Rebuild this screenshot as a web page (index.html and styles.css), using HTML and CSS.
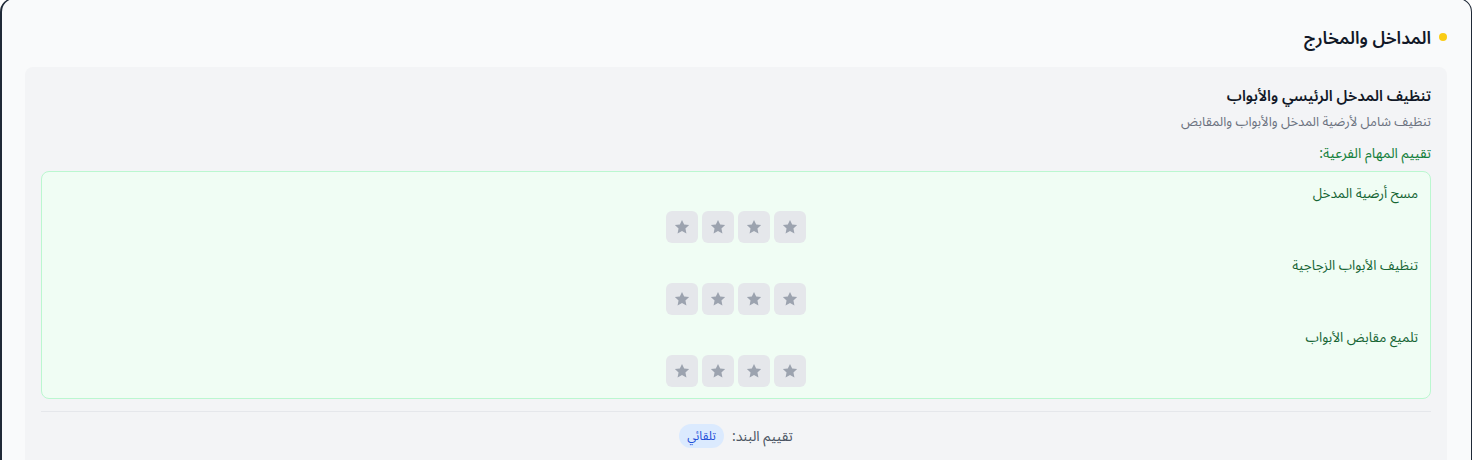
FILE: index.html
```html
<!DOCTYPE html>
<html lang="ar" dir="rtl">
<head>
<meta charset="utf-8">
<link rel="stylesheet" href="styles.css">
</head>
<body>
<div class="section">
  <div class="section-head">
    <span class="dot"></span>
    <h2 class="section-title">المداخل والمخارج</h2>
  </div>
  <div class="item">
    <h3 class="item-title">تنظيف المدخل الرئيسي والأبواب</h3>
    <p class="item-desc">تنظيف شامل لأرضية المدخل والأبواب والمقابض</p>
    <p class="sub-head">تقييم المهام الفرعية:</p>
    <div class="subtasks">
      <div class="subtask">
        <div class="subtask-name">مسح أرضية المدخل</div>
        <div class="stars">
          <button class="star"><svg viewBox="0 0 24 24"><path d="M12 2.5l2.9 6.1 6.6.8-4.9 4.6 1.3 6.6L12 17.3l-5.9 3.3 1.3-6.6-4.9-4.6 6.6-.8z"/></svg></button>
          <button class="star"><svg viewBox="0 0 24 24"><path d="M12 2.5l2.9 6.1 6.6.8-4.9 4.6 1.3 6.6L12 17.3l-5.9 3.3 1.3-6.6-4.9-4.6 6.6-.8z"/></svg></button>
          <button class="star"><svg viewBox="0 0 24 24"><path d="M12 2.5l2.9 6.1 6.6.8-4.9 4.6 1.3 6.6L12 17.3l-5.9 3.3 1.3-6.6-4.9-4.6 6.6-.8z"/></svg></button>
          <button class="star"><svg viewBox="0 0 24 24"><path d="M12 2.5l2.9 6.1 6.6.8-4.9 4.6 1.3 6.6L12 17.3l-5.9 3.3 1.3-6.6-4.9-4.6 6.6-.8z"/></svg></button>
        </div>
      </div>
      <div class="subtask">
        <div class="subtask-name">تنظيف الأبواب الزجاجية</div>
        <div class="stars">
          <button class="star"><svg viewBox="0 0 24 24"><path d="M12 2.5l2.9 6.1 6.6.8-4.9 4.6 1.3 6.6L12 17.3l-5.9 3.3 1.3-6.6-4.9-4.6 6.6-.8z"/></svg></button>
          <button class="star"><svg viewBox="0 0 24 24"><path d="M12 2.5l2.9 6.1 6.6.8-4.9 4.6 1.3 6.6L12 17.3l-5.9 3.3 1.3-6.6-4.9-4.6 6.6-.8z"/></svg></button>
          <button class="star"><svg viewBox="0 0 24 24"><path d="M12 2.5l2.9 6.1 6.6.8-4.9 4.6 1.3 6.6L12 17.3l-5.9 3.3 1.3-6.6-4.9-4.6 6.6-.8z"/></svg></button>
          <button class="star"><svg viewBox="0 0 24 24"><path d="M12 2.5l2.9 6.1 6.6.8-4.9 4.6 1.3 6.6L12 17.3l-5.9 3.3 1.3-6.6-4.9-4.6 6.6-.8z"/></svg></button>
        </div>
      </div>
      <div class="subtask">
        <div class="subtask-name">تلميع مقابض الأبواب</div>
        <div class="stars">
          <button class="star"><svg viewBox="0 0 24 24"><path d="M12 2.5l2.9 6.1 6.6.8-4.9 4.6 1.3 6.6L12 17.3l-5.9 3.3 1.3-6.6-4.9-4.6 6.6-.8z"/></svg></button>
          <button class="star"><svg viewBox="0 0 24 24"><path d="M12 2.5l2.9 6.1 6.6.8-4.9 4.6 1.3 6.6L12 17.3l-5.9 3.3 1.3-6.6-4.9-4.6 6.6-.8z"/></svg></button>
          <button class="star"><svg viewBox="0 0 24 24"><path d="M12 2.5l2.9 6.1 6.6.8-4.9 4.6 1.3 6.6L12 17.3l-5.9 3.3 1.3-6.6-4.9-4.6 6.6-.8z"/></svg></button>
          <button class="star"><svg viewBox="0 0 24 24"><path d="M12 2.5l2.9 6.1 6.6.8-4.9 4.6 1.3 6.6L12 17.3l-5.9 3.3 1.3-6.6-4.9-4.6 6.6-.8z"/></svg></button>
        </div>
      </div>
    </div>
    <div class="item-foot">
      <span class="foot-label">تقييم البند:</span>
      <span class="pill">تلقائي</span>
    </div>
  </div>
</div>
</body>
</html>
```
FILE: styles.css
```css
* { box-sizing: border-box; }
html, body { margin: 0; padding: 0; background: #ffffff; }
body {
  font-family: "Noto Sans", "Noto Sans Arabic", sans-serif;
  color: #111827;
  overflow: hidden;
  height: 460px;
}
.section {
  margin-top: -2px;
  width: 1472px;
  border: 1px solid #1f2937;
  border-left-width: 2px;
  border-radius: 14px;
  background: #f9fafb;
  padding: 24px 24px 24px 23px;
  min-height: 520px;
}
.section-head {
  display: flex;
  align-items: center;
  gap: 8px;
  margin-bottom: 16px;
  height: 28px;
}
.dot {
  width: 8px;
  height: 8px;
  border-radius: 50%;
  background: #facc15;
  flex: none;
}
.section-title {
  margin: 0;
  font-size: 17.5px;
  line-height: 28px;
  font-weight: 600;
  color: #111827;
}
.item {
  background: #f3f4f6;
  border-radius: 8px;
  padding: 16px;
  min-height: 420px;
}
.item-title {
  margin: 0;
  font-size: 15px;
  line-height: 24px;
  font-weight: 600;
  color: #111827;
}
.item-desc {
  margin: 4px 0 0;
  font-size: 13px;
  line-height: 20px;
  color: #6b7280;
}
.sub-head {
  margin: 12px 0 0;
  font-size: 14px;
  line-height: 20px;
  color: #15803d;
}
.subtasks {
  margin-top: 8px;
  background: #f0fdf4;
  border: 1px solid #bbf7d0;
  border-radius: 8px;
  padding: 11px 12px;
  display: flex;
  flex-direction: column;
  gap: 12px;
}
.subtask {
  display: flex;
  flex-direction: column;
  gap: 8px;
}
.subtask-name {
  font-size: 13.5px;
  line-height: 20px;
  color: #166534;
}
.stars {
  display: flex;
  justify-content: center;
  gap: 4px;
}
.star {
  width: 32px;
  height: 32px;
  border: none;
  border-radius: 6px;
  background: #e5e7eb;
  padding: 0;
  display: flex;
  align-items: center;
  justify-content: center;
}
.star svg {
  width: 18px;
  height: 18px;
  fill: #9ca3af;
}
.item-foot {
  margin-top: 12px;
  border-top: 1px solid #e5e7eb;
  padding-top: 12px;
  display: flex;
  justify-content: center;
  align-items: center;
  gap: 8px;
}
.foot-label {
  font-size: 14px;
  line-height: 20px;
  color: #4b5563;
}
.pill {
  font-size: 12px;
  line-height: 16px;
  padding: 4px 8px;
  border-radius: 9999px;
  background: #dbeafe;
  color: #1d4ed8;
}
```
